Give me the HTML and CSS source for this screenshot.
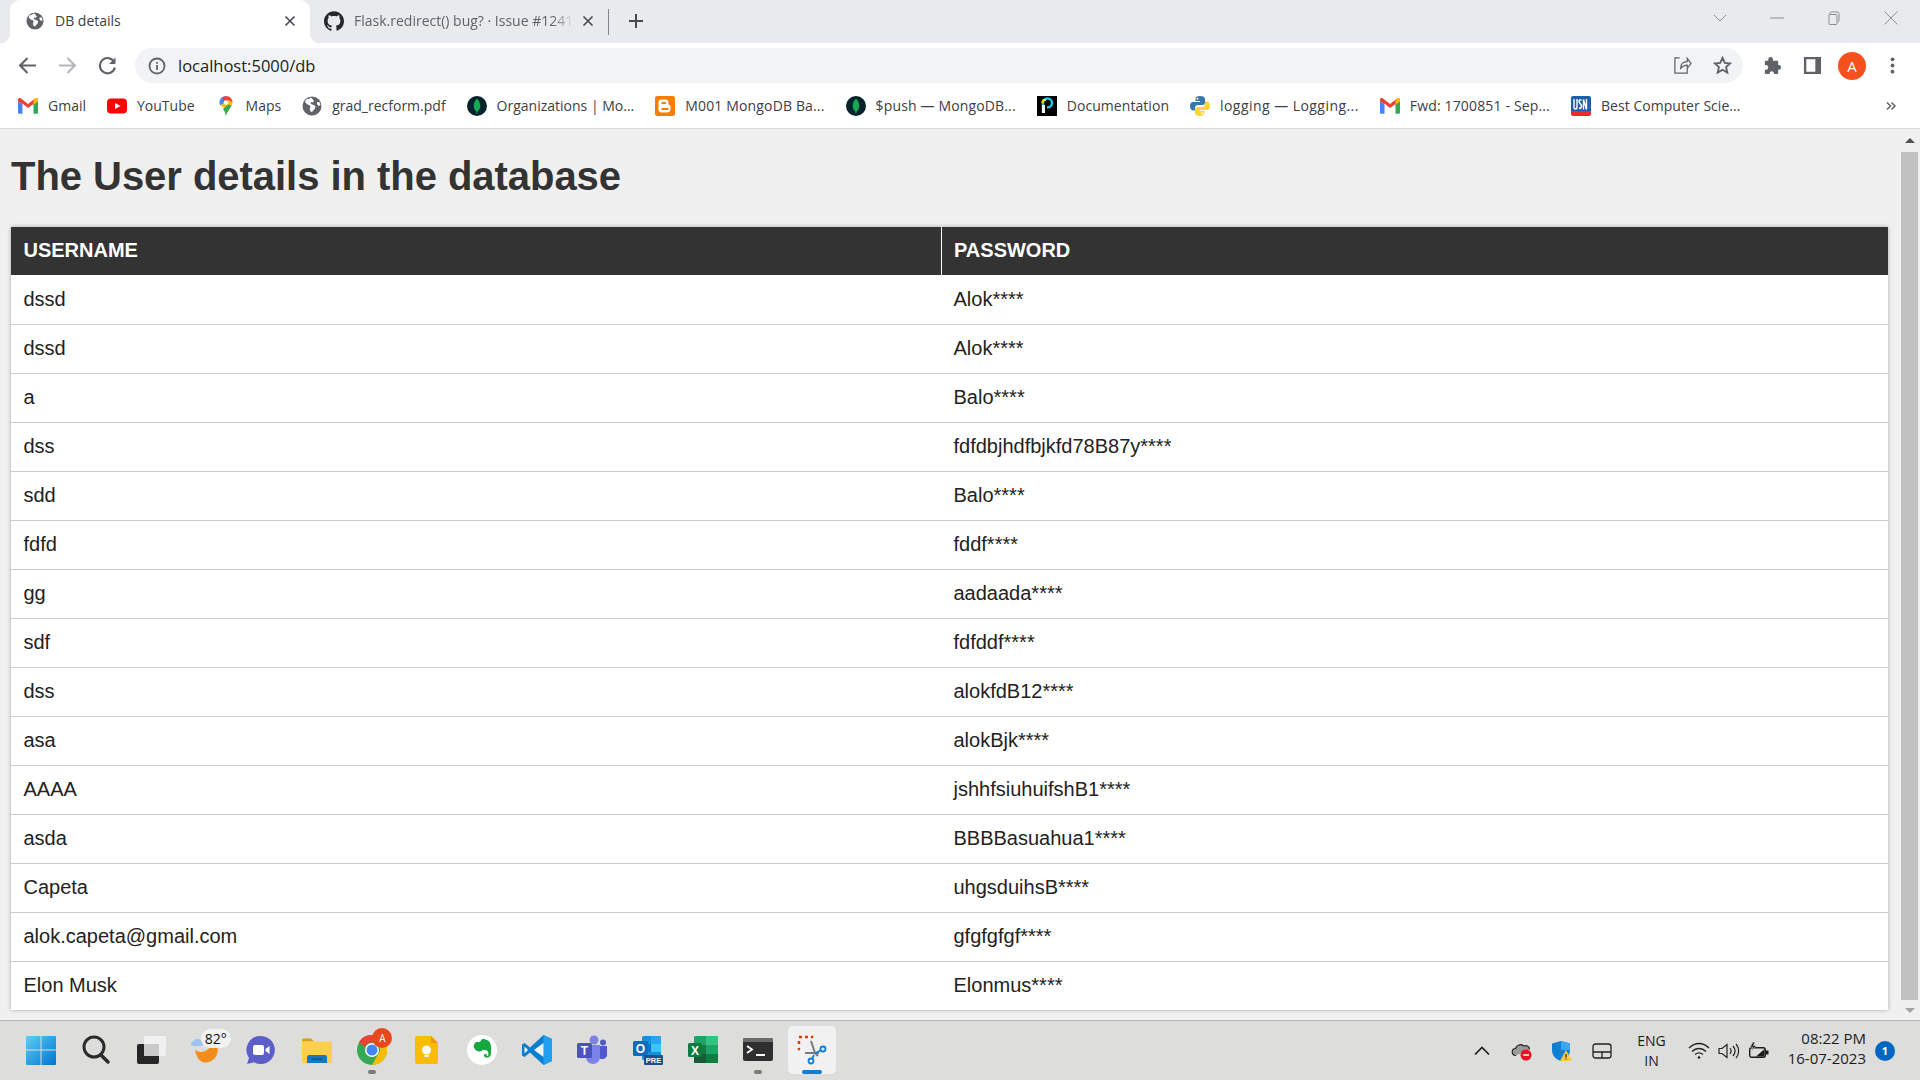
FILE: index.html
```html
<!DOCTYPE html>
<html lang="en">
<head>
  <meta charset="UTF-8" />
  <title>DB details</title>
  <link rel="stylesheet" href="styles.css">
</head>
<body>
  <!-- shared icons -->
  <svg class="sprite" aria-hidden="true">
    <symbol id="globe" viewBox="0 0 20 20">
      <circle cx="10" cy="10" r="9.5" fill="#5f6368"/>
      <path d="M9 1.5 6.5 3 4 3.5 3 6l2.5 2.5 2 .5 1 2-1 2 1.5 3 1.5-.5 2.5-3 .5-2.5-3-1.5-2-1 .5-1.500 2 .5 1-1.500L10.500 3Z" fill="#fff"/>
      <path d="M15 6h2.500l1 3-2 1-1.500-2Z" fill="#fff"/>
    </symbol>
    <symbol id="leaf" viewBox="0 0 20 20">
      <circle cx="10" cy="10" r="10" fill="#04232c"/>
      <path d="M10 2.500c3 3 3.800 6.500 3 9.500-.5 1.800-2 2.800-2.500 3.500l-.3 2.500h-.5l-.3-2.500C8.900 14.800 7.500 13.800 7 12c-.8-3 0-6.500 3-9.500Z" fill="#13aa52"/>
    </symbol>
    <symbol id="gmail" viewBox="0 0 20 16">
      <path d="M0 3.500V14.500a1.300 1.300 0 0 0 1.300 1.300H4.500V6.500Z" fill="#4285f4"/>
      <path d="M20 3.500V14.500a1.300 1.300 0 0 1-1.300 1.300H15.500V6.500Z" fill="#34a853"/>
      <path d="M0 1.800C0 .3 1.800-.4 3 .5L10 6l7-5.500c1.200-.9 3-.2 3 1.300v1.700l-4.500 3.500v-1L10 10 4.500 5.500v1L0 3.500Z" fill="#ea4335"/>
      <path d="M15.500 6.500V2.500L17 .5c1.200-.9 3-.2 3 1.300v1.700Z" fill="#fbbc04"/>
    </symbol>
  </svg>

  <header class="browser">
    <div class="tabstrip">
      <div class="tab tab-active">
        <svg class="favicon"><use href="#globe"/></svg>
        <span class="tab-title">DB details</span>
        <svg class="tab-close" viewBox="0 0 12 12"><path d="M1.500 1.500l9 9M10.500 1.500l-9 9"/></svg>
      </div>
      <div class="tab tab-other">
        <svg class="favicon" viewBox="0 0 24 24"><path fill="#24292f" d="M12 .297c-6.630 0-12 5.373-12 12 0 5.303 3.438 9.800 8.205 11.385.6.113.82-.258.82-.577 0-.285-.01-1.040-.015-2.040-3.338.724-4.042-1.610-4.042-1.610C4.422 18.070 3.633 17.700 3.633 17.700c-1.087-.744.084-.729.084-.729 1.205.084 1.838 1.236 1.838 1.236 1.070 1.835 2.809 1.305 3.495.998.108-.776.417-1.305.76-1.605-2.665-.3-5.466-1.332-5.466-5.930 0-1.310.465-2.380 1.235-3.220-.135-.303-.54-1.523.105-3.176 0 0 1.005-.322 3.300 1.230.96-.267 1.980-.399 3-.405 1.020.006 2.040.138 3 .405 2.280-1.552 3.285-1.230 3.285-1.230.645 1.653.24 2.873.12 3.176.765.84 1.230 1.910 1.230 3.220 0 4.610-2.805 5.625-5.475 5.920.42.36.81 1.096.81 2.220 0 1.606-.015 2.896-.015 3.286 0 .315.21.69.825.57C20.565 22.092 24 17.592 24 12.297c0-6.627-5.373-12-12-12"/></svg>
        <span class="tab-title tab-fade">Flask.redirect() bug? · Issue #1241</span>
        <svg class="tab-close" viewBox="0 0 12 12"><path d="M1.500 1.500l9 9M10.500 1.500l-9 9"/></svg>
      </div>
      <svg class="newtab" viewBox="0 0 14 14"><path d="M7 0v14M0 7h14"/></svg>
      <div class="winctl">
        <svg viewBox="0 0 14 14"><path d="M1 4l6 6 6-6"/></svg>
        <svg viewBox="0 0 14 14"><path d="M0 7h14"/></svg>
        <svg viewBox="0 0 14 14"><path d="M3 3.500V2.500a1.500 1.500 0 0 1 1.500-1.500h6A1.500 1.500 0 0 1 12 2.500v7a1.500 1.500 0 0 1-1.500 1.500M2 3.500h7a1 1 0 0 1 1 1v8a1 1 0 0 1-1 1H3a1 1 0 0 1-1-1v-8a1 1 0 0 1 1-1Z"/></svg>
        <svg viewBox="0 0 14 14"><path d="M.5.500l13 13M13.500.500l-13 13"/></svg>
      </div>
    </div>

    <div class="toolbar">
      <span class="tbtn"><svg viewBox="0 0 18 18" class="stroke"><path d="M17 9H2M9 2 2 9l7 7"/></svg></span>
      <span class="tbtn"><svg viewBox="0 0 18 18" class="stroke dim"><path d="M1 9h15M9 2l7 7-7 7"/></svg></span>
      <span class="tbtn"><svg viewBox="0 0 18 18" class="stroke"><path d="M15.500 6A7.200 7.200 0 1 0 16 11"/><path class="solid" d="M16.500 1.500v6h-6Z"/></svg></span>
      <div class="omnibox">
        <svg class="info" viewBox="0 0 18 18"><circle cx="9" cy="9" r="7.500"/><path d="M9 8v5M9 5v1.800"/></svg>
        <span class="url">localhost:5000/db</span>
        <span class="omni-right">
          <span class="tbtn"><svg viewBox="0 0 20 20" class="thin"><path d="M7 2H2v16h13v-5M8 13c0-5 3-7 7-7V2.500l4 5.500-4 5V9.500c-3 0-5 1-7 3.500Z"/></svg></span>
          <span class="tbtn"><svg viewBox="0 0 20 20" class="stroke"><path d="M10 2l2.400 5.300 5.600.6-4.200 3.800 1.200 5.700-5-2.900-5 2.900 1.200-5.700L2 7.900l5.600-.6Z"/></svg></span>
        </span>
      </div>
      <div class="tool-right">
        <span class="tbtn"><svg viewBox="0 0 20 20"><path fill="#5f6368" d="M8 1a2.500 2.500 0 0 1 2.500 2.500V5H15a1 1 0 0 1 1 1v3.500h.5a2.500 2.500 0 0 1 0 5H16V18a1 1 0 0 1-1 1h-3.500v-1a2.300 2.300 0 0 0-4.500 0v1H3a1 1 0 0 1-1-1v-3.500h1a2.500 2.500 0 0 0 0-5H2V6a1 1 0 0 1 1-1h2.500V3.500A2.500 2.500 0 0 1 8 1Z"/></svg></span>
        <span class="tbtn"><svg viewBox="0 0 20 20"><path fill="#5f6368" d="M1 1h18v18H1Zm2.500 2.500v13H13v-13Z" fill-rule="evenodd"/></svg></span>
        <span class="tbtn"><span class="avatar">A</span></span>
        <span class="tbtn"><svg viewBox="0 0 20 20"><g fill="#5f6368"><circle cx="10" cy="3.500" r="2"/><circle cx="10" cy="10" r="2"/><circle cx="10" cy="16.500" r="2"/></g></svg></span>
      </div>
    </div>

    <nav class="bookmarks">
      <a class="bm"><svg class="bm-icon"><use href="#gmail"/></svg>Gmail</a>
      <a class="bm"><svg class="bm-icon" viewBox="0 0 20 20"><rect y="2.500" width="20" height="15" rx="4" fill="#f00"/><path d="M8 7l5.500 3L8 13Z" fill="#fff"/></svg>YouTube</a>
      <a class="bm"><svg class="bm-icon" viewBox="0 0 20 20"><path d="M10 0C6 0 3.500 3 3.500 6.500c0 1.200.3 2 .8 2.800L10 6.500Z" fill="#4285f4"/><path d="M10 0c4 0 6.500 3 6.500 6.500L13 8.500 10 6.500 6 2Z" fill="#ea4335"/><path d="M4.300 9.300 13 4l3.500 2.500c0 1.200-.4 2.300-1 3.300L10 13Z" fill="#fbbc04"/><path d="M4.300 9.300c1.500 2.700 4.700 5 5.700 10.700l1-3 4.500-7.200-3-1.300L7 13Z" fill="#34a853"/><circle cx="10" cy="6.500" r="2.300" fill="#fff"/></svg>Maps</a>
      <a class="bm"><svg class="bm-icon"><use href="#globe"/></svg>grad_recform.pdf</a>
      <a class="bm"><svg class="bm-icon"><use href="#leaf"/></svg>Organizations | Mo...</a>
      <a class="bm bm-wider"><svg class="bm-icon" viewBox="0 0 20 20"><rect width="20" height="20" rx="2.500" fill="#f57d00"/><path d="M6.500 3.500h4a3 3 0 0 1 3 3V8a1 1 0 0 0 1 1 1 1 0 0 1 1 1v3a3.500 3.500 0 0 1-3.500 3.500h-5.500A3 3 0 0 1 3.500 13.500v-7a3 3 0 0 1 3-3Z" fill="#fff"/><path d="M7.200 7h3M7.200 13h5.600" stroke="#f57d00" stroke-width="1.800" stroke-linecap="round"/></svg>M001 MongoDB Ba...</a>
      <a class="bm bm-wider"><svg class="bm-icon"><use href="#leaf"/></svg>$push — MongoDB...</a>
      <a class="bm bm-wide"><svg class="bm-icon" viewBox="0 0 20 20"><rect width="20" height="20" fill="#000"/><path d="M6 16V7a4.500 4.500 0 0 1 9 0c0 2.500-2 4.500-5 4.500" fill="none" stroke="#1cc8ee" stroke-width="2.500"/><path d="M5 9v8h3v-8Z" fill="#fff"/><path d="M9 4h-2.500L5 7" fill="none" stroke="#e8f000" stroke-width="2"/></svg>Documentation</a>
      <a class="bm bm-widest"><svg class="bm-icon" viewBox="0 0 20 20"><path d="M10 0c-3 0-4.500 1.200-4.500 3v2H10v1H3C1 6 0 8 0 10s1 4.500 3 4.500h2V12c0-1.800 1.500-3 3-3h4.500C14 9 15 8 15 6.500V3c0-1.800-2-3-5-3ZM7.500 1.800a1 1 0 1 1 0 2 1 1 0 0 1 0-2Z" fill="#3776ab"/><path d="M10 20c3 0 4.500-1.200 4.500-3v-2H10v-1h7c2 0 3-2 3-4s-1-4.500-3-4.500h-2V8c0 1.800-1.500 3-3 3H7.500C6 11 5 12 5 13.500V17c0 1.800 2 3 5 3Zm2.500-1.800a1 1 0 1 1 0-2 1 1 0 0 1 0 2Z" fill="#ffd43b"/></svg>logging — Logging...</a>
      <a class="bm bm-wider"><svg class="bm-icon"><use href="#gmail"/></svg>Fwd: 1700851 - Sep...</a>
      <a class="bm bm-wide"><svg class="bm-icon" viewBox="0 0 20 20"><path d="M2 0h16a2 2 0 0 1 2 2v13H0V2a2 2 0 0 1 2-2Z" fill="#1b5fa8"/><path d="M0 15h20v3a2 2 0 0 1-2 2H2a2 2 0 0 1-2-2Z" fill="#ee2a2a"/><path d="M3 3v8.500a1.500 1.500 0 0 0 3 0V3M10.500 4H9a1.200 1.200 0 0 0-1 1.500c0 1.500 2.500 2.500 2.500 4.500 0 1-.6 2.500-2.500 2.500M12.500 13.500V3.500l3 10V3" fill="none" stroke="#fff" stroke-width="1.400"/></svg>Best Computer Scie...</a>
      <svg class="bm-more" viewBox="0 0 10 10"><path d="M1 1.500 4.500 5 1 8.500M5.500 1.500 9 5 5.500 8.500"/></svg>
    </nav>
  </header>

  <div class="viewport">
    <main class="page">
      <h1>The User details in the database</h1>
      <table class="users">
        <thead>
          <tr><th class="col-user">USERNAME</th><th>PASSWORD</th></tr>
        </thead>
        <tbody>
          <tr><td>dssd</td><td>Alok****</td></tr>
          <tr><td>dssd</td><td>Alok****</td></tr>
          <tr><td>a</td><td>Balo****</td></tr>
          <tr><td>dss</td><td>fdfdbjhdfbjkfd78B87y****</td></tr>
          <tr><td>sdd</td><td>Balo****</td></tr>
          <tr><td>fdfd</td><td>fddf****</td></tr>
          <tr><td>gg</td><td>aadaada****</td></tr>
          <tr><td>sdf</td><td>fdfddf****</td></tr>
          <tr><td>dss</td><td>alokfdB12****</td></tr>
          <tr><td>asa</td><td>alokBjk****</td></tr>
          <tr><td>AAAA</td><td>jshhfsiuhuifshB1****</td></tr>
          <tr><td>asda</td><td>BBBBasuahua1****</td></tr>
          <tr><td>Capeta</td><td>uhgsduihsB****</td></tr>
          <tr><td>alok.capeta@gmail.com</td><td>gfgfgfgf****</td></tr>
          <tr><td>Elon Musk</td><td>Elonmus****</td></tr>
        </tbody>
      </table>
    </main>
    <div class="scrollbar">
      <div class="sb-btn"><span class="arrow-up"></span></div>
      <div class="sb-thumb"></div>
      <div class="sb-btn"><span class="arrow-down"></span></div>
    </div>
  </div>

  <footer class="taskbar">
    <div class="apps">
      <span class="app"><svg viewBox="0 0 30 30"><defs><linearGradient id="win" x1="0" y1="0" x2="1" y2="1"><stop offset="0" stop-color="#5ad0fb"/><stop offset="1" stop-color="#0073cf"/></linearGradient></defs><path fill="url(#win)" d="M1 1h13.500v13.500H0V2a1 1 0 0 1 1-1Zm14.500 0H29a1 1 0 0 1 1 1v12.500H15.500ZM0 15.500h14.500V30H1a1 1 0 0 1-1-1Zm15.500 0H30V29a1 1 0 0 1-1 1H15.500Z"/></svg></span>
      <span class="app"><svg viewBox="0 0 30 30"><circle cx="13" cy="12" r="10" fill="none" stroke="#2b2b2b" stroke-width="3"/><path d="M20 20l7 7" stroke="#2b2b2b" stroke-width="3.500" stroke-linecap="round"/></svg></span>
      <span class="app"><svg viewBox="0 0 30 30"><rect x="1" y="9" width="22" height="20" rx="2" fill="#262626"/><rect x="8" y="1" width="22" height="20" rx="2" fill="#f4f4f4" fill-opacity=".85"/><rect x="8" y="9" width="15" height="12" fill="#c9c9c9"/></svg></span>
      <span class="app app-weather">
        <svg viewBox="0 0 30 30"><path d="M4 14C6 18 16 20 24 6 30 14 26 27 15 27.500 9 28 5 22 4 14Z" fill="#f28c1c"/><path d="M0 9c0-2 2-3 3-3 1-3 6-3 7 0 3 0 3 5 0 5H2c-1 0-2-1-2-2Z" fill="#9dc3ee"/></svg>
        <span class="temp">82°</span>
      </span>
      <span class="app"><svg viewBox="0 0 30 30"><path d="M15 1a14 14 0 1 1-7 26.200L1 29l2-6A14 14 0 0 1 15 1Z" fill="#5b5fc7"/><rect x="7" y="10" width="11" height="10" rx="2" fill="#fff"/><path d="M19.500 14l4-3v8l-4-3Z" fill="#fff"/></svg></span>
      <span class="app"><svg viewBox="0 0 30 30"><path d="M0 5a1.500 1.500 0 0 1 1.500-1.500H9l3 3h-12Z" fill="#d9a00a"/><path d="M0 6.500h30V27a1 1 0 0 1-1 1H1a1 1 0 0 1-1-1Z" fill="#fdcf4a"/><path d="M5 28v-6a2 2 0 0 1 2-2h16a2 2 0 0 1 2 2v6Z" fill="#0f79c9"/><path d="M10 24h10" stroke="#0a4f88" stroke-width="1.200"/></svg></span>
      <span class="app app-chrome">
        <svg viewBox="0 0 30 30"><circle cx="15" cy="15" r="15" fill="#34a853"/><path d="M15 0a15 15 0 0 1 13 7.500H15a7.500 7.500 0 0 0-7 4.500L2 7a15 15 0 0 1 13-7Z" fill="#ea4335"/><path d="M28 7.500A15 15 0 0 1 15 30l6.500-11.500A7.500 7.500 0 0 0 21 9Z" fill="#fbbc04"/><circle cx="15" cy="15" r="7" fill="#fff"/><circle cx="15" cy="15" r="5.500" fill="#4285f4"/></svg>
        <span class="app-badge">A</span>
        <span class="running"></span>
      </span>
      <span class="app"><svg viewBox="0 0 30 30"><path d="M5 1h14l7 7v19a2 2 0 0 1-2 2H5a2 2 0 0 1-2-2V3a2 2 0 0 1 2-2Z" fill="#fbbc04"/><path d="M19 1l7 7h-7Z" fill="#f29900"/><circle cx="14.500" cy="15" r="4.500" fill="#fff"/><rect x="12.500" y="20" width="4" height="2" fill="#fff"/></svg></span>
      <span class="app"><svg viewBox="0 0 30 30"><circle cx="15" cy="15" r="15" fill="#fff"/><path d="M9 7h4l2-3c5 0 9 2 9 8 0 3 1 9-2 10-2 1-4 1-5-1-.5-1 1-3 3-2l-1 1 2 1c1-3 0-6-3-6-1 0-3-1-3 1-4 1-6 0-8-3-1-2 0-4 2-6Z" fill="#14a83f"/></svg></span>
      <span class="app"><svg viewBox="0 0 30 30"><path d="M21.500 0 30 4v22l-8.500 4L8 17.500 2.500 22 0 20.500V9.500L2.500 8 8 12.500Z" fill="#0a7fd0"/><path d="M21.500 0 30 4v22l-8.500 4Z" fill="#21a0ef"/><path d="M21.500 8v14L12 15Z" fill="#eef4fa"/><path d="M2.500 11.500v7L6 15Z" fill="#eef4fa"/></svg></span>
      <span class="app"><svg viewBox="0 0 30 30"><circle cx="17" cy="5" r="4.500" fill="#7b83eb"/><circle cx="26" cy="7.500" r="3" fill="#5059c9"/><path d="M21 11h8a1 1 0 0 1 1 1v8a5 5 0 0 1-9 2Z" fill="#5059c9"/><path d="M9 10h14v12a6.500 6.500 0 0 1-14 0Z" fill="#7b83eb"/><rect y="8" width="15" height="15" rx="1.500" fill="#4b53bc"/><text x="7.500" y="20" class="glyph" font-size="12">T</text></svg></span>
      <span class="app"><svg viewBox="0 0 30 30"><rect x="9" y="1" width="19" height="24" rx="1.500" fill="#1490df"/><rect x="18" y="1" width="10" height="8" fill="#28a8ea"/><rect x="9" y="9" width="10" height="8" fill="#0078d4"/><rect x="18" y="9" width="10" height="8" fill="#50d9ff" fill-opacity=".7"/><rect y="6" width="15" height="15" rx="1.500" fill="#0f6cbd"/><text x="7.500" y="18" class="glyph" font-size="12">O</text><rect x="11" y="20" width="19" height="10" rx="1" fill="#1f4e8a"/><text x="20.500" y="28" class="glyph" font-size="7.500">PRE</text></svg></span>
      <span class="app"><svg viewBox="0 0 30 30"><rect x="6" y="1" width="24" height="27" rx="1.500" fill="#21a366"/><rect x="18" y="1" width="12" height="9" fill="#33c481"/><rect x="6" y="10" width="12" height="9" fill="#107c41"/><rect x="6" y="19" width="24" height="9" fill="#185c37"/><rect x="18" y="19" width="12" height="9" fill="#107c41"/><rect y="8" width="14" height="14" rx="1.500" fill="#0f7b3f"/><text x="7" y="19.500" class="glyph" font-size="12">X</text></svg></span>
      <span class="app"><svg viewBox="0 0 30 30"><rect y="3" width="30" height="23" rx="2" fill="#2f2f2f"/><path d="M0 5a2 2 0 0 1 2-2h26a2 2 0 0 1 2 2v2H0Z" fill="#6b6b6b"/><path d="M4 11l5 3.500-5 3.500" fill="none" stroke="#fff" stroke-width="1.800"/><path d="M13 20h9" stroke="#fff" stroke-width="2"/></svg><span class="running"></span></span>
      <span class="app app-active"><svg viewBox="0 0 30 30"><path d="M2 2h3M8 2h3M14 2h1v1M2 6v3M2 13v1h1" stroke="#d83b01" stroke-width="2.500" fill="none"/><path d="M14 6 18 18M22 18H8" stroke="#7a7a7a" stroke-width="2" fill="none"/><path d="M18 18l3 3" stroke="#7a7a7a" stroke-width="2"/><circle cx="26" cy="14" r="2.500" fill="none" stroke="#0f7fd4" stroke-width="1.800"/><circle cx="14" cy="26" r="2.500" fill="none" stroke="#0f7fd4" stroke-width="1.800"/><path d="M19 18l5-3M17 20l-2 4" stroke="#0f7fd4" stroke-width="1.800"/></svg><span class="running running-active"></span></span>
    </div>

    <div class="tray">
      <span class="tray-item"><svg width="16" height="10" viewBox="0 0 16 10"><path d="M1 8.500l7-7 7 7" fill="none" stroke="#1c1c1c" stroke-width="1.600"/></svg></span>
      <span class="tray-item"><svg width="22" height="22" viewBox="0 0 22 22"><path d="M5 15.500a3.500 3.500 0 0 1-.5-7C5.500 5 10 3.500 12.500 6c2.500-1 6 0 6 3.500" fill="#9a9a9a" stroke="#222" stroke-width="1.200"/><circle cx="15" cy="15" r="5.500" fill="#e81123"/><path d="M12 15h6" stroke="#fff" stroke-width="1.500"/></svg></span>
      <span class="tray-item"><svg width="22" height="22" viewBox="0 0 22 22"><path d="M10 1l9 2.500V10c0 5-3 9-9 11-6-2-9-6-9-11V3.500Z" fill="#0f7fd4"/><path d="M10 1l9 2.500V10H10Z" fill="#3ba7ef"/><path d="M15 10l6 11H9Z" fill="#ffc83d"/><path d="M15 14v3.500M15 18.500v1" stroke="#222" stroke-width="1.200"/></svg></span>
      <span class="tray-item"><svg width="20" height="16" viewBox="0 0 20 16" fill="none" stroke="#222" stroke-width="1.300"><rect x="1" y="1" width="18" height="14" rx="2.500"/><path d="M1 9h18M10 9v6"/></svg></span>
      <span class="tray-lang"><span>ENG</span><span>IN</span></span>
      <span class="tray-item tray-narrow"><svg width="22" height="18" viewBox="0 0 22 18" fill="none" stroke="#222" stroke-width="1.300"><path d="M1 6c6-6 14-6 20 0M4 9.500c4-4 10-4 14 0M7 12.500c2.500-2 5.500-2 8 0"/><circle cx="11" cy="15.500" r="1.300" fill="#222" stroke="none"/></svg></span>
      <span class="tray-item tray-narrow"><svg width="22" height="18" viewBox="0 0 22 18" fill="none" stroke="#222" stroke-width="1.200"><path d="M1 6.500h3L9 2.500v13l-5-4H1Z"/><path d="M12 6c1.500 2 1.500 4 0 6M15 4c2.500 3 2.500 7 0 10M18 2c3.500 4 3.500 10 0 14"/></svg></span>
      <span class="tray-item tray-narrow"><svg width="22" height="18" viewBox="0 0 22 18"><rect x="1.700" y="5.700" width="15.600" height="9.600" rx="2" fill="#dddddb" stroke="#1c1c1c" stroke-width="1.400"/><path d="M8 14.500 16.500 7v7.500Z" fill="#1c1c1c"/><rect x="18" y="8.500" width="2.500" height="4" fill="#1c1c1c"/><path d="M5 0 2 5h3L3.500 9l5-5.500H5.500L7 0Z" fill="#1c1c1c" stroke="#dddddb" stroke-width=".6"/></svg></span>
      <span class="clock"><span>08:22 PM</span><span>16-07-2023</span></span>
      <span class="notif">1</span>
    </div>
  </footer>
</body>
</html>
```

FILE: styles.css
```css
* {
  box-sizing: border-box;
}
html, body {
  height: 100%;
}
body {
  margin: 0;
  display: flex;
  flex-direction: column;
  overflow: hidden;
  font-family: "Liberation Sans", Arial, sans-serif;
  background: #f0f0f0;
}
svg {
  display: block;
  flex: none;
}
.sprite {
  display: none;
}

/* browser chrome */
.browser {
  flex: none;
  font-family: "Open Sans", "Noto Sans", sans-serif;
  color: #3c4043;
}
.tabstrip {
  display: flex;
  align-items: center;
  height: 43px;
  padding-left: 10px;
  background: #e8eaed;
}
.tab {
  display: flex;
  align-items: center;
  height: 43px;
  padding-bottom: 2px;
  font-size: 14px;
}
.tab-active {
  position: relative;
  width: 300px;
  padding-left: 16px;
  padding-right: 14px;
  background: #fff;
  border-radius: 10px 10px 0 0;
}
.tab-active::before,
.tab-active::after {
  content: "";
  position: absolute;
  bottom: 0;
  width: 10px;
  height: 10px;
}
.tab-active::before {
  left: -10px;
  background: radial-gradient(circle at 0 0, #e8eaed 10px, #fff 10.5px);
}
.tab-active::after {
  right: -10px;
  background: radial-gradient(circle at 100% 0, #e8eaed 10px, #fff 10.5px);
}
.tab-other {
  width: 299px;
  padding-left: 14px;
  padding-right: 15px;
  position: relative;
}
.tab-other::after {
  content: "";
  position: absolute;
  right: 0;
  top: 9px;
  height: 26px;
  border-right: 1px solid #80868b;
}
.favicon {
  width: 18px;
  height: 18px;
  margin-right: 11px;
}
.tab-other .favicon {
  width: 20px;
  height: 20px;
  margin-right: 10px;
}
.tab-title {
  flex: 1;
  white-space: nowrap;
  overflow: hidden;
}
.tab-other .tab-title {
  color: #5f6368;
}
.tab-fade {
  -webkit-mask-image: linear-gradient(to right, #000 90%, transparent 100%);
  mask-image: linear-gradient(to right, #000 90%, transparent 100%);
}
.tab-close {
  width: 12px;
  height: 12px;
  margin-left: 8px;
  fill: none;
  stroke: #45494d;
  stroke-width: 1.600;
}
.newtab {
  width: 14px;
  height: 14px;
  margin-left: 20px;
  margin-bottom: 2px;
  fill: none;
  stroke: #45494d;
  stroke-width: 2;
}
.winctl {
  display: flex;
  align-items: center;
  margin-left: auto;
  height: 36px;
  align-self: flex-start;
  padding-right: 22px;
  gap: 43px;
}
.winctl svg {
  width: 14px;
  height: 14px;
  fill: none;
  stroke: #8a8d91;
  stroke-width: 1;
}

.toolbar {
  display: flex;
  height: 40px;
  padding: 5px 8px 0 7px;
  background: #fff;
}
.tbtn {
  display: flex;
  align-items: center;
  justify-content: center;
  width: 40px;
  height: 35px;
}
.tbtn svg {
  width: 19px;
  height: 19px;
}
.stroke {
  fill: none;
  stroke: #5f6368;
  stroke-width: 2;
}
.stroke.dim {
  stroke: #b4b7ba;
}
.stroke .solid {
  fill: #5f6368;
  stroke: none;
}
.thin {
  fill: none;
  stroke: #5f6368;
  stroke-width: 1.300;
}
.omnibox {
  flex: 1;
  display: flex;
  align-items: center;
  height: 35px;
  margin: 0 9px 0 8px;
  padding-left: 13px;
  background: #f1f3f4;
  border-radius: 18px;
}
.info {
  width: 18px;
  height: 18px;
  margin-right: 12px;
  fill: none;
  stroke: #5f6368;
  stroke-width: 1.800;
}
.url {
  font-size: 16.500px;
  color: #202124;
}
.omni-right {
  display: flex;
  margin-left: auto;
  padding-right: 1px;
}
.tool-right {
  display: flex;
}
.avatar {
  width: 28px;
  height: 28px;
  border-radius: 50%;
  background: #f4511e;
  color: #fff;
  font-size: 15px;
  text-align: center;
  line-height: 28px;
}

.bookmarks {
  display: flex;
  align-items: center;
  gap: 21px;
  height: 46px;
  padding: 0 24px 0 18px;
  background: #fff;
  border-bottom: 1px solid #d9d9d9;
}
.bm {
  display: flex;
  align-items: center;
  font-size: 14px;
  color: #3c4043;
  white-space: nowrap;
}
.bm-wide {
  letter-spacing: 0.05px;
}
.bm-wider {
  letter-spacing: 0.15px;
}
.bm-widest {
  letter-spacing: 0.45px;
}
.bm-icon {
  width: 20px;
  height: 20px;
  margin-right: 10px;
}
.bm-more {
  width: 10px;
  height: 10px;
  margin-left: auto;
  fill: none;
  stroke: #5f6368;
  stroke-width: 1.500;
}

/* page */
.viewport {
  flex: 1;
  display: flex;
  min-height: 0;
  background: #f0f0f0;
}
.page {
  flex: 1;
  padding: 0 13px 0 11px;
  min-width: 0;
}
h1 {
  margin: 0;
  padding: 24px 0 28px;
  font-size: 40px;
  line-height: 46px;
  font-weight: bold;
  letter-spacing: -0.04px;
  color: #333;
}
.users {
  width: 100%;
  border-collapse: collapse;
  table-layout: fixed;
  background: #fff;
  box-shadow: 0 0 4px rgba(0, 0, 0, 0.3);
  font-size: 20px;
}
.col-user {
  width: 930px;
}
th {
  height: 48px;
  padding: 0 12px 2px 12.5px;
  background: #333;
  color: #fff;
  text-align: left;
  font-weight: bold;
  border-left: 1px solid #fff;
}
th:first-child {
  border-left: none;
}
td {
  height: 49px;
  padding: 0 12px 0 12.5px;
  color: #222;
  border-bottom: 1px solid #ccc;
}
tr:last-child td {
  border-bottom: none;
}

.scrollbar {
  flex: none;
  display: flex;
  flex-direction: column;
  width: 19px;
  padding-right: 2px;
}
.sb-btn {
  display: flex;
  align-items: center;
  justify-content: center;
  height: 23px;
}
.sb-btn:last-child {
  height: 20px;
}
.sb-thumb {
  flex: 1;
  background: #c1c1c1;
}
.arrow-up,
.arrow-down {
  width: 0;
  height: 0;
  border-left: 5px solid transparent;
  border-right: 5px solid transparent;
}
.arrow-up {
  border-bottom: 5px solid #505050;
}
.arrow-down {
  border-top: 5px solid #a3a3a3;
}

/* taskbar */
.taskbar {
  flex: none;
  display: flex;
  justify-content: space-between;
  height: 60px;
  padding-left: 13px;
  background: #dddddb;
  border-top: 1px solid #b5b5b5;
  font-family: "Open Sans", "Noto Sans", sans-serif;
  color: #1c1c1c;
}
.apps {
  display: flex;
  align-items: center;
  padding-bottom: 2px;
}
.app {
  position: relative;
  display: flex;
  align-items: center;
  justify-content: center;
  width: 55.200px;
  height: 48px;
}
.app svg {
  width: 30px;
  height: 30px;
}
.glyph {
  fill: #fff;
  font-family: "Liberation Sans", sans-serif;
  font-weight: bold;
  text-anchor: middle;
}
.app-active {
  width: 48px;
  margin-left: 2px;
  background: #f1f1f1;
  border-radius: 5px;
}
.temp {
  position: absolute;
  top: 3px;
  right: 3px;
  padding: 0 4px;
  background: #f2f2f2;
  border-radius: 10px;
  font-size: 14px;
  line-height: 19px;
  color: #111;
}
.app-badge {
  position: absolute;
  top: 2px;
  right: 7px;
  width: 20px;
  height: 20px;
  border-radius: 50%;
  background: #e8481c;
  color: #fff;
  font-size: 10px;
  line-height: 20px;
  text-align: center;
}
.running {
  position: absolute;
  bottom: 0;
  left: 50%;
  width: 8px;
  height: 4px;
  margin-left: -4px;
  border-radius: 2px;
  background: #7a7a7a;
}
.running-active {
  width: 20px;
  margin-left: -10px;
  background: #0f7fd4;
}
.tray {
  display: flex;
  align-items: center;
  padding-right: 25px;
}
.tray-item {
  display: flex;
  align-items: center;
  justify-content: center;
  width: 40px;
}
.tray-narrow {
  width: 30px;
}
.tray-lang {
  display: flex;
  flex-direction: column;
  align-items: center;
  width: 49px;
  margin: 0 8px 0 5px;
  font-size: 14px;
  line-height: 20px;
}
.clock {
  display: flex;
  flex-direction: column;
  align-items: flex-end;
  width: 92px;
  margin: 0 9px 5px 0;
  font-size: 15px;
  line-height: 20px;
}
.notif {
  width: 20px;
  height: 20px;
  border-radius: 50%;
  background: #0067c0;
  color: #fff;
  font-size: 11px;
  font-weight: bold;
  line-height: 20px;
  text-align: center;
}
```
